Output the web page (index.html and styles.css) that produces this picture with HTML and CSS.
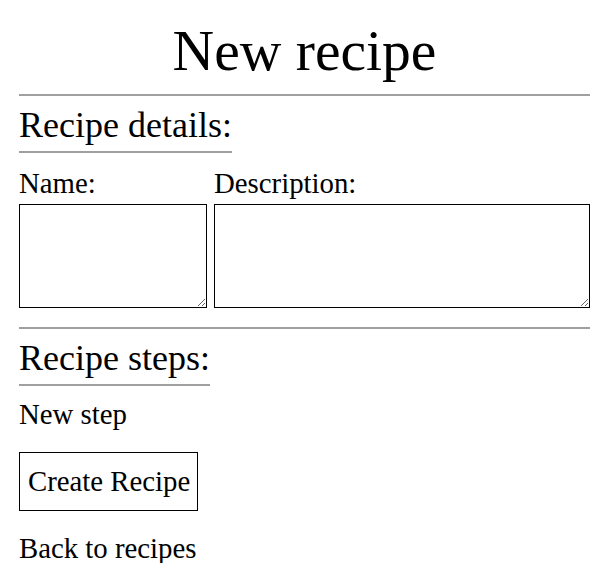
FILE: index.html
```html
<!DOCTYPE html>
<html lang="en">
<head>
<meta charset="utf-8">
<title>New recipe</title>
<link rel="stylesheet" href="styles.css">
</head>
<body>
<main class="page">
  <h1 class="title">New recipe</h1>
  <hr class="rule">
  <section class="section">
    <h2 class="section-title">Recipe details:</h2>
    <div class="fields">
      <label class="field">
        <span class="field-label">Name:</span>
        <textarea class="field-input"></textarea>
      </label>
      <label class="field">
        <span class="field-label">Description:</span>
        <textarea class="field-input"></textarea>
      </label>
    </div>
  </section>
  <hr class="rule">
  <section class="section">
    <h2 class="section-title">Recipe steps:</h2>
    <div class="new-step">New step</div>
  </section>
  <button class="create-btn" type="button">Create Recipe</button>
  <a class="back-link">Back to recipes</a>
</main>
</body>
</html>
```

FILE: styles.css
```css
html, body {
  margin: 0;
  padding: 0;
  background: #fff;
}
body {
  font-family: "Liberation Serif", "Times New Roman", serif;
  font-size: 28.8px;
  color: #000;
}
.page {
  display: flex;
  flex-direction: column;
  align-items: flex-start;
  padding: 0 22px 0 19px;
}
.title {
  align-self: stretch;
  text-align: center;
  font-size: 57.6px;
  font-weight: normal;
  line-height: 1;
  margin: 22px 0 0 0;
}
.rule {
  align-self: stretch;
  border: 0;
  height: 2px;
  background: #a0a0a0;
  margin: 14px 0 0 0;
}
.section {
  align-self: stretch;
  display: flex;
  flex-direction: column;
  align-items: flex-start;
}
.section-title {
  font-size: 36px;
  font-weight: normal;
  line-height: 1;
  margin: 11px 0 0 0;
  padding-bottom: 8px;
  border-bottom: 2px solid #a0a0a0;
}
.fields {
  align-self: stretch;
  display: grid;
  grid-template-columns: 1fr 2fr;
  gap: 7px;
  margin-top: 16px;
}
.field {
  display: flex;
  flex-direction: column;
}
.field-label {
  line-height: 1;
  margin-bottom: 7px;
}
.field-input {
  box-sizing: border-box;
  width: 100%;
  height: 104px;
  border: 1px solid #000;
  margin: 0;
  padding: 2px;
  font: inherit;
}
.section + .rule {
  margin-top: 19px;
}
.new-step {
  line-height: 1;
  margin-top: 14px;
}
.create-btn {
  margin-top: 23px;
  font: inherit;
  line-height: 1;
  background: #fff;
  color: #000;
  border: 1px solid #000;
  border-radius: 0;
  padding: 14px 7px 14px 8px;
}
.back-link {
  line-height: 1;
  margin-top: 23px;
  color: #000;
}
```
